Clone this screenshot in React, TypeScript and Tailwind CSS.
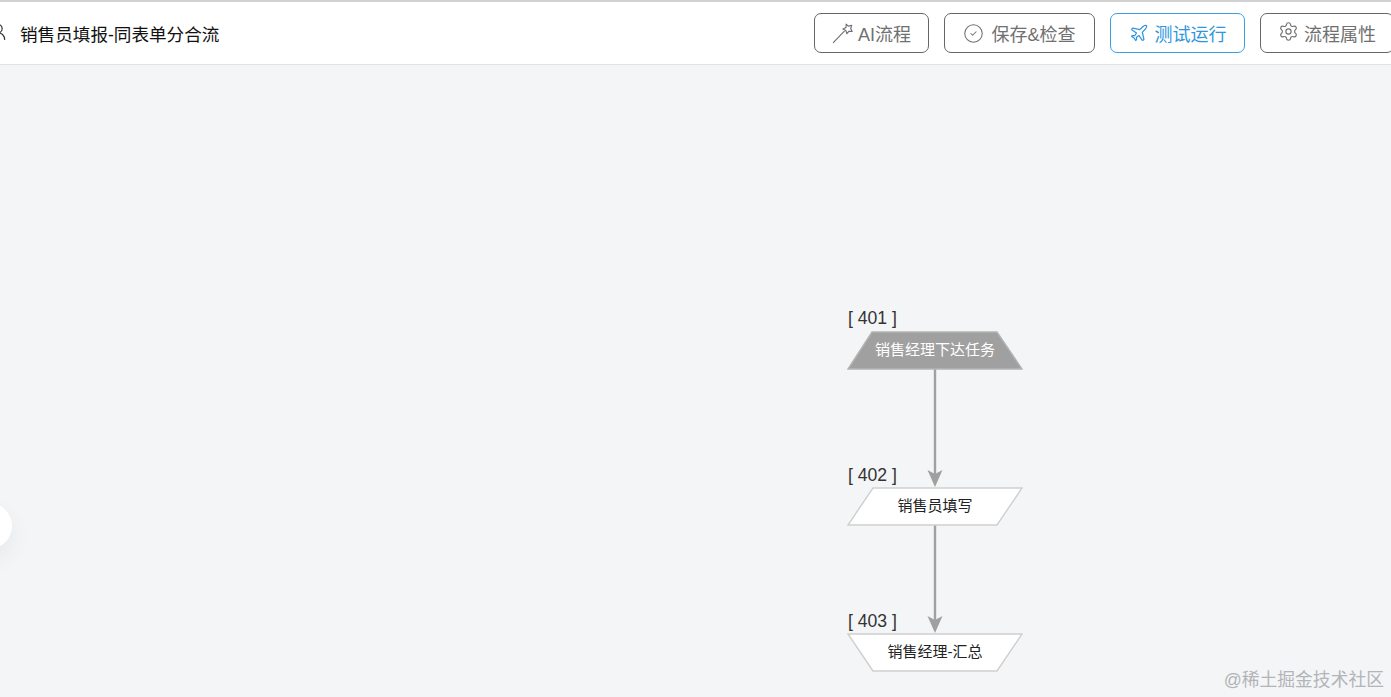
import React from 'react';
import { CircleCheck, Settings, Plane, UserRound } from 'lucide-react';

const font = { cjk: "font-['Liberation_Sans','Noto_Sans_CJK_SC',sans-serif]" };

interface NodeProps {
  id: string;
  top: number;
  labelTop: number;
  label: string;
  points: string;
  fill: string;
  stroke: string;
  textClass: string;
}

const FlowNode: React.FC<NodeProps> = ({ id, top, labelTop, label, points, fill, stroke, textClass }) => {
  return (
    <div className="absolute left-[847px] w-[176px] h-[39px]" style={{ top }}>
      <span className="absolute left-[1px] text-[17.6px] leading-[22px] text-[#333] whitespace-nowrap" style={{ top: labelTop }}>[ {id} ]</span>
      <svg className="absolute inset-0" width="176" height="39" viewBox="0 0 176 39">
        <polygon points={points} fill={fill} stroke={stroke} strokeWidth="1.4" />
      </svg>
      <span className={`absolute inset-0 flex items-center justify-center text-[15px] pb-[1px] ${textClass}`}>{label}</span>
    </div>
  );
};

const Edge: React.FC<{ top: number; height: number }> = ({ top, height }) => {
  return (
    <svg className="absolute left-[925px]" style={{ top }} width="20" height={height} viewBox={`0 0 20 ${height}`}>
      <line x1="10" y1="0" x2="10" y2={height - 10} stroke="#a0a0a0" strokeWidth="2.4" />
      <polygon points={`2.5,${height - 17} 10,${height - 13} 17.5,${height - 17} 10,${height}`} fill="#a0a0a0" />
    </svg>
  );
};

const MagicIcon = () => (
  <svg width="21" height="21" viewBox="0 0 20 20" fill="none" stroke="currentColor" strokeWidth="1.1" strokeLinejoin="round">
    <line x1="1" y1="19" x2="12" y2="7.5" />
    <polygon points="13.5,1 15.5,3 18.8,2.2 17.8,5.2 19.2,8 16,8 14.2,10.2 13.2,7.2 10.4,5.8 13.4,4.2" />
  </svg>
);

const App: React.FC = () => {
  return (
    <div className={`${font.cjk} relative w-full h-[697px] flex flex-col overflow-hidden bg-[#f3f5f7]`}>
      <header className="h-[65px] shrink-0 bg-white border-t-2 border-t-[#d2d2d2] border-b border-b-[#e0e2e5] flex items-center justify-between">
        <div className="flex items-center">
          <UserRound size={20} strokeWidth={1.4} className="-ml-[12px] -mt-[2px] text-[#333]" />
          <h1 className="ml-[12px] pt-[5px] text-[17.6px] font-normal text-[#111] whitespace-nowrap">销售员填报-同表单分合流</h1>
        </div>
        <div className="flex items-center gap-[15px] -mr-[3px] mt-[1px] pb-[1px] text-[18px] text-[#707070]">
          <button className="w-[115px] h-[40px] flex items-center justify-center gap-[5px] rounded-[7px] border border-[#666] bg-white">
            <MagicIcon />
            <span className="pt-[5px]">AI流程</span>
          </button>
          <button className="w-[151px] h-[40px] flex items-center justify-center gap-[7px] rounded-[7px] border border-[#666] bg-white">
            <CircleCheck size={21} strokeWidth={1.2} />
            <span className="pt-[5px]">保存&检查</span>
          </button>
          <button className="w-[135px] h-[40px] flex items-center justify-center gap-[6px] rounded-[7px] border border-[#3a9fe0] bg-white text-[#2f96dc]">
            <Plane size={20} strokeWidth={1.5} />
            <span className="pt-[5px]">测试运行</span>
          </button>
          <button className="w-[134px] h-[40px] flex items-center justify-center gap-[5px] rounded-[7px] border border-[#666] bg-white">
            <Settings size={21} strokeWidth={1.3} className="-mt-[3px]" />
            <span className="pt-[5px]">流程属性</span>
          </button>
        </div>
      </header>

      <main className="relative flex-1">
        <div className="absolute -left-[34px] top-[438px] w-[46px] h-[46px] rounded-full bg-white shadow-[0_10px_24px_rgba(0,0,0,0.06)]" />
      </main>

      <Edge top={369} height={118} />
      <Edge top={525} height={108} />

      <FlowNode id="401" top={331} labelTop={-24} label="销售经理下达任务" points="25,1 150,1 175,38 1,38" fill="#a0a0a0" stroke="#b4b4b4" textClass="text-white" />
      <FlowNode id="402" top={487} labelTop={-23} label="销售员填写" points="26,1 175,1 150,38 1,38" fill="#ffffff" stroke="#cfcfcf" textClass="text-[#222]" />
      <FlowNode id="403" top={633} labelTop={-23} label="销售经理-汇总" points="1,1 175,1 150,38 26,38" fill="#ffffff" stroke="#cfcfcf" textClass="text-[#222]" />

      <span className="absolute right-[7px] bottom-[6px] text-[17.8px] leading-[22px] text-[#b2b4b8] whitespace-nowrap">@稀土掘金技术社区</span>
    </div>
  );
};

export default App;
